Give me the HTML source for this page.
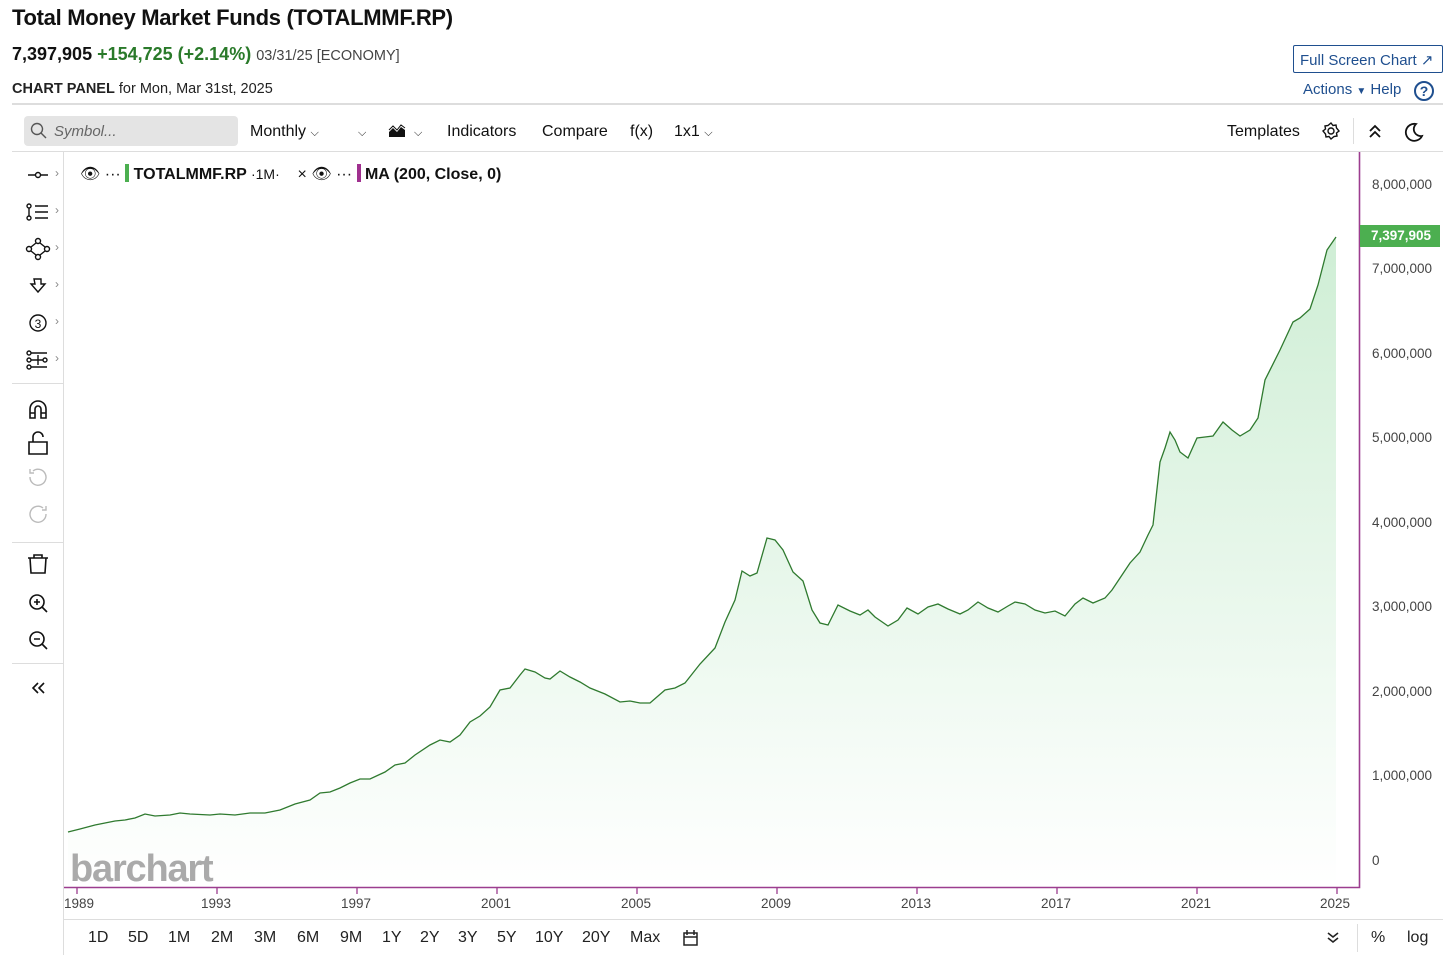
<!DOCTYPE html>
<html><head><meta charset="utf-8"><style>
*{margin:0;padding:0;box-sizing:border-box}
body{width:1456px;height:966px;background:#fff;font-family:"Liberation Sans",sans-serif;color:#111;position:relative;overflow:hidden}
.a{position:absolute;white-space:nowrap}
.tb{font-size:16px;color:#111}
.yl{font-size:13.5px;color:#444;left:1372px}
.xl{font-size:13.5px;color:#444;top:896px}
.rg{font-size:16px;top:929px;color:#222}
.ch{position:absolute;left:55px;font-size:12px;color:#888}
</style></head><body>
<div class="a" style="left:12px;top:5px;font-size:22px;font-weight:bold;letter-spacing:-0.3px">Total Money Market Funds (TOTALMMF.RP)</div>
<div class="a" style="left:12px;top:44px;font-size:18px;font-weight:bold">7,397,905 <span style="color:#2a7a2a">+154,725 (+2.14%)</span> <span style="font-weight:normal;font-size:14.5px;color:#444">03/31/25 [ECONOMY]</span></div>
<div class="a" style="left:12px;top:81px;font-size:14.5px;color:#222"><b>CHART PANEL</b> for Mon, Mar 31st, 2025</div>
<div class="a" style="left:1293px;top:45px;width:150px;height:28px;border:1px solid #1f4f8f;border-radius:2px;color:#1f4f8f;font-size:15px;padding:5px 0 0 6px">Full Screen Chart ↗</div>
<div class="a" style="left:1303px;top:81px;font-size:15px;color:#1f4f8f">Actions <span style="font-size:10px">▼</span> Help</div>
<svg class="a" style="left:1413px;top:80px" width="22" height="22"><circle cx="11" cy="11" r="9" fill="none" stroke="#1f4f8f" stroke-width="2"/><text x="11" y="16" text-anchor="middle" font-size="14" font-weight="bold" fill="#1f4f8f" font-family="Liberation Sans">?</text></svg>
<div class="a" style="left:12px;top:103px;width:1431px;height:2px;background:#ddd"></div>
<div class="a" style="left:24px;top:116px;width:214px;height:30px;background:#e4e4e4;border-radius:4px"></div>
<svg class="a" style="left:30px;top:122px" width="18" height="18"><circle cx="7" cy="7" r="5.5" fill="none" stroke="#555" stroke-width="1.4"/><path d="M11 11l5 5" stroke="#555" stroke-width="1.4"/></svg>
<div class="a" style="left:54px;top:123px;font-size:15px;font-style:italic;color:#666">Symbol...</div>
<div class="a tb" style="left:250px;top:123px">Monthly <span style="font-size:11px">⌵</span></div>
<div class="a tb" style="left:358px;top:127px;font-size:11px">⌵</div>
<svg class="a" style="left:388px;top:124px" width="18" height="14"><path d="M1 13V8l4-4 4 4 4-5 4 3v7z" fill="#111"/><path d="M1 6l4-4 4 4 4-5 4 3" stroke="#111" fill="none"/></svg>
<div class="a tb" style="left:414px;top:127px;font-size:11px">⌵</div>
<div class="a tb" style="left:447px;top:123px">Indicators</div>
<div class="a tb" style="left:542px;top:123px">Compare</div>
<div class="a tb" style="left:630px;top:123px">f(x)</div>
<div class="a tb" style="left:674px;top:123px">1x1 <span style="font-size:11px">⌵</span></div>
<div class="a tb" style="left:1227px;top:123px">Templates</div>
<svg class="a" style="left:1321px;top:121px" width="20" height="20"><circle cx="10" cy="10" r="3" fill="none" stroke="#111" stroke-width="1.4"/><path d="M10 2l2 2.5 3-.5.5 3L18 10l-2.5 2 .5 3-3 .5L10 18l-2-2.5-3 .5-.5-3L2 10l2.5-2-.5-3 3-.5z" fill="none" stroke="#111" stroke-width="1.4"/></svg>
<div class="a" style="left:1353px;top:118px;width:1px;height:26px;background:#ddd"></div>
<svg class="a" style="left:1367px;top:123px" width="16" height="16"><path d="M3 8l5-5 5 5M3 14l5-5 5 5" fill="none" stroke="#111" stroke-width="1.8"/></svg>
<svg class="a" style="left:1402px;top:121px" width="22" height="22"><path d="M14 3A8.5 8.5 0 1 0 20 15 7 7 0 0 1 14 3z" fill="none" stroke="#111" stroke-width="1.8"/></svg>
<div class="a" style="left:12px;top:151px;width:1431px;height:1px;background:#ddd"></div>
<div class="a" style="left:63px;top:152px;width:1px;height:803px;background:#ddd"></div>
<div class="a" style="left:12px;top:383px;width:51px;height:1px;background:#ddd"></div>
<div class="a" style="left:12px;top:542px;width:51px;height:1px;background:#ddd"></div>
<div class="a" style="left:12px;top:663px;width:51px;height:1px;background:#ddd"></div>
<svg class="a" style="left:0;top:152px" width="63" height="560" fill="none" stroke="#111" stroke-width="1.4">
<path d="M28 23h7M41 23h7"/><circle cx="38" cy="23" r="2.5"/>
<circle cx="29" cy="54" r="2"/><circle cx="29" cy="66" r="2"/><path d="M29 56v8M35 54h13M35 60h13M35 66h13"/>
<circle cx="38" cy="89" r="2.5"/><circle cx="38" cy="105" r="2.5"/><circle cx="29" cy="97" r="2.5"/><circle cx="47" cy="97" r="2.5"/><path d="M31 95l5-4M40 91l5 4M45 99l-5 4M36 103l-5-4"/>
<path d="M34 127h7v5h4l-7 8-7-8h4z"/>
<circle cx="38" cy="171" r="8"/>
<text x="38" y="176" text-anchor="middle" font-size="12" font-family="Liberation Sans" fill="#111" stroke="none">3</text>
<circle cx="29" cy="201" r="2"/><circle cx="29" cy="208" r="2"/><circle cx="29" cy="215" r="2"/><circle cx="45" cy="208" r="2"/><path d="M31 201h16M31 215h16M31 208h12M38 203v10"/>
<path d="M30 266v-9a8 8 0 0 1 16 0v9h-5v-9a3 3 0 0 0-6 0v9zM30 261h5M41 261h5" stroke-width="1.6"/>
<path d="M29 290h18v12H29zM33 290v-5a5 5 0 0 1 10 0" stroke-width="1.6"/>
<path d="M30 325a8 8 0 1 0 3-6M30 317v4h4" stroke="#bbb"/>
<path d="M46 362a8 8 0 1 1-3-6M46 354v4h-4" stroke="#bbb"/>
<path d="M28 406h20M34 406v-3h8v3M30 406l1 15h14l1-15" stroke-width="1.6"/>
<circle cx="37" cy="450" r="7" stroke-width="1.6"/><path d="M42 455l5 5M34 450h6M37 447v6" stroke-width="1.6"/>
<circle cx="37" cy="487" r="7" stroke-width="1.6"/><path d="M42 492l5 5M34 487h6" stroke-width="1.6"/>
<path d="M38 541l-5-5 5-5M44 541l-5-5 5-5" stroke-width="1.6"/>
</svg>
<div class="ch" style="top:166px">›</div><div class="ch" style="top:203px">›</div><div class="ch" style="top:240px">›</div><div class="ch" style="top:277px">›</div><div class="ch" style="top:314px">›</div><div class="ch" style="top:351px">›</div>
<svg class="a" style="left:64px;top:152px" width="1392" height="760">
<defs><linearGradient id="g" x1="0" y1="0" x2="0" y2="1"><stop offset="0" stop-color="#c9ecd0"/><stop offset="1" stop-color="#ffffff"/></linearGradient></defs>
<g transform="translate(-64,-152)">
<path d="M68 832L80 829 95 825 105 823 115 821 125 820 135 818 145 814 155 816 170 815 180 813 190 814 210 815 220 814 235 815 250 813 265 813 280 810 295 804 310 800 320 793 330 792 340 788 350 783 360 779 370 779 385 772 395 765 405 763 415 755 430 745 440 740 450 742 460 735 470 722 480 716 490 707 500 690 510 688 520 675 525 669 535 672 545 678 550 679 560 671 570 677 580 682 590 688 605 694 620 702 630 701 640 703 650 703 665 690 675 688 685 683 700 664 715 648 725 622 735 600 742 571 750 576 757 573 767 538 775 540 783 550 793 572 803 581 812 610 820 623 828 625 838 605 850 611 860 615 868 610 875 617 888 626 898 620 907 608 918 614 928 607 938 604 948 609 960 614 968 610 978 602 988 608 998 612 1008 606 1015 602 1025 604 1035 610 1045 613 1055 611 1065 616 1075 604 1083 598 1093 603 1105 598 1112 590 1120 578 1130 563 1140 552 1148 535 1153 525 1160 462 1165 448 1170 432 1175 440 1180 452 1188 458 1197 438 1205 437 1213 436 1223 422 1232 430 1240 436 1250 430 1258 418 1265 380 1280 350 1293 322 1300 318 1310 309 1318 285 1327 250 1336 237V886H68z" fill="url(#g)" opacity="0.9"/>
<path d="M68 832L80 829 95 825 105 823 115 821 125 820 135 818 145 814 155 816 170 815 180 813 190 814 210 815 220 814 235 815 250 813 265 813 280 810 295 804 310 800 320 793 330 792 340 788 350 783 360 779 370 779 385 772 395 765 405 763 415 755 430 745 440 740 450 742 460 735 470 722 480 716 490 707 500 690 510 688 520 675 525 669 535 672 545 678 550 679 560 671 570 677 580 682 590 688 605 694 620 702 630 701 640 703 650 703 665 690 675 688 685 683 700 664 715 648 725 622 735 600 742 571 750 576 757 573 767 538 775 540 783 550 793 572 803 581 812 610 820 623 828 625 838 605 850 611 860 615 868 610 875 617 888 626 898 620 907 608 918 614 928 607 938 604 948 609 960 614 968 610 978 602 988 608 998 612 1008 606 1015 602 1025 604 1035 610 1045 613 1055 611 1065 616 1075 604 1083 598 1093 603 1105 598 1112 590 1120 578 1130 563 1140 552 1148 535 1153 525 1160 462 1165 448 1170 432 1175 440 1180 452 1188 458 1197 438 1205 437 1213 436 1223 422 1232 430 1240 436 1250 430 1258 418 1265 380 1280 350 1293 322 1300 318 1310 309 1318 285 1327 250 1336 237" fill="none" stroke="#2f7a2f" stroke-width="1.3"/>
<path d="M64 887.5H1359.5V152" fill="none" stroke="#9c3d8f" stroke-width="1.6"/>
<path d="M77 888v6M217 888v6M357 888v6M497 888v6M637 888v6M777 888v6M917 888v6M1057 888v6M1197 888v6M1337 888v6" stroke="#9c3d8f" stroke-width="1.3"/>
<text x="70" y="881" font-family="Liberation Sans" font-size="38" font-weight="bold" fill="#aaa" letter-spacing="-1.2">barchart</text>
</g></svg>
<div class="a" style="left:80px;top:164px;font-size:16px;color:#111;font-weight:bold">
<span style="font-weight:normal">👁 ···</span> <span style="display:inline-block;width:4px;height:18px;background:#4caf50;vertical-align:-3px"></span> TOTALMMF.RP <span style="font-weight:normal;font-size:14px">·1M·</span> &nbsp;&nbsp;&nbsp;<span style="font-weight:normal">× 👁 ···</span> <span style="display:inline-block;width:4px;height:18px;background:#a0308f;vertical-align:-3px"></span> MA (200, Close, 0)</div>
<div class="a yl" style="top:177px">8,000,000</div>
<div class="a" style="left:1360px;top:225px;width:80px;height:22px;background:#4caf50;color:#fff;font-weight:bold;font-size:13.5px;padding:3px 0 0 11px">7,397,905</div>
<div class="a yl" style="top:261px">7,000,000</div>
<div class="a yl" style="top:346px">6,000,000</div>
<div class="a yl" style="top:430px">5,000,000</div>
<div class="a yl" style="top:515px">4,000,000</div>
<div class="a yl" style="top:599px">3,000,000</div>
<div class="a yl" style="top:684px">2,000,000</div>
<div class="a yl" style="top:768px">1,000,000</div>
<div class="a yl" style="top:853px">0</div>
<div class="a xl" style="left:64px">1989</div>
<div class="a xl" style="left:201px">1993</div>
<div class="a xl" style="left:341px">1997</div>
<div class="a xl" style="left:481px">2001</div>
<div class="a xl" style="left:621px">2005</div>
<div class="a xl" style="left:761px">2009</div>
<div class="a xl" style="left:901px">2013</div>
<div class="a xl" style="left:1041px">2017</div>
<div class="a xl" style="left:1181px">2021</div>
<div class="a xl" style="left:1320px">2025</div>
<div class="a" style="left:64px;top:919px;width:1379px;height:1px;background:#ddd"></div>
<div class="a rg" style="left:88px">1D</div><div class="a rg" style="left:128px">5D</div><div class="a rg" style="left:168px">1M</div><div class="a rg" style="left:211px">2M</div><div class="a rg" style="left:254px">3M</div><div class="a rg" style="left:297px">6M</div><div class="a rg" style="left:340px">9M</div><div class="a rg" style="left:382px">1Y</div><div class="a rg" style="left:420px">2Y</div><div class="a rg" style="left:458px">3Y</div><div class="a rg" style="left:497px">5Y</div><div class="a rg" style="left:535px">10Y</div><div class="a rg" style="left:582px">20Y</div><div class="a rg" style="left:630px">Max</div>
<svg class="a" style="left:682px;top:929px" width="18" height="18" fill="none" stroke="#222" stroke-width="1.5"><rect x="2" y="4" width="13" height="12"/><path d="M2 8h13M5 1v5M12 1v5"/></svg>
<svg class="a" style="left:1326px;top:931px" width="14" height="14" fill="none" stroke="#222" stroke-width="1.6"><path d="M2 2l5 4 5-4M2 7l5 4 5-4"/></svg>
<div class="a" style="left:1357px;top:924px;width:1px;height:28px;background:#ddd"></div>
<div class="a rg" style="left:1371px">%</div><div class="a rg" style="left:1407px">log</div>
</body></html>
